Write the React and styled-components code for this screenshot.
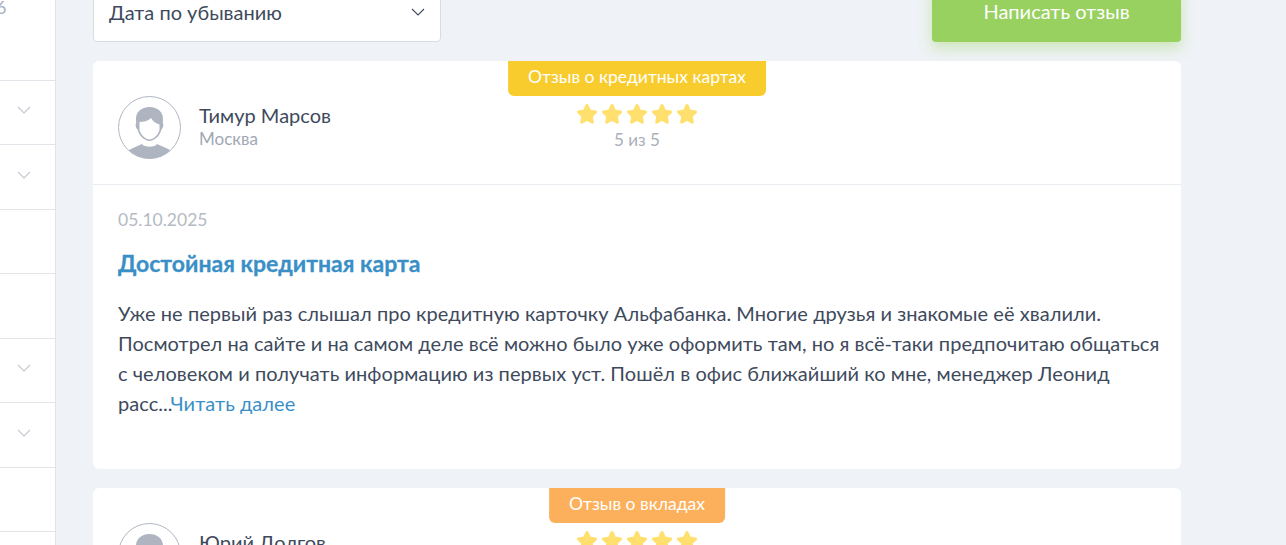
import styled, { createGlobalStyle } from 'styled-components';

const GlobalStyle = createGlobalStyle`
  html, body {
    margin: 0;
    height: 100%;
    overflow: hidden;
    background: #eff2f6;
  }
  * {
    box-sizing: border-box;
  }
`;

const Page = styled.div`
  display: flex;
  align-items: flex-start;
  height: 545px;
  overflow: hidden;
  font-family: Lato, "Noto Sans", "Liberation Sans", sans-serif;
  color: #3e4a5c;
`;

const Sidebar = styled.aside`
  flex: 0 0 56px;
  height: 545px;
  background: #fff;
  border-right: 1px solid #e1e4e9;
`;

const SideTop = styled.div`
  height: 79.5px;
  font-size: 18px;
  line-height: 14px;
  color: #aab1bd;
  margin-left: -4px;
`;

const SideRow = styled.div`
  height: 64.5px;
  border-top: 1px solid #e1e4e9;
  display: flex;
  align-items: center;
  justify-content: flex-end;
  padding: 0 24px 4px 0;
  color: #c3c8d0;
`;

const Main = styled.main`
  flex: 1;
  margin-top: -16px;
  padding: 0 105px 0 37px;
`;

const Toolbar = styled.div`
  display: flex;
  justify-content: space-between;
  margin-bottom: 19px;
`;

const SortSelect = styled.div`
  width: 348px;
  height: 58px;
  background: #fff;
  border: 1px solid #d9dde3;
  border-radius: 4px;
  display: flex;
  align-items: center;
  justify-content: space-between;
  padding: 0 15px 2px;
  font-size: 20px;
  color: #3e4a5c;
`;

const WriteButton = styled.button`
  width: 249px;
  height: 58px;
  border: 0;
  border-radius: 4px;
  background: #98d15f;
  box-shadow: 0 6px 14px rgba(152, 209, 95, 0.4);
  color: #fff;
  font: inherit;
  font-size: 20px;
  padding: 0 0 4px;
`;

const Card = styled.article`
  position: relative;
  background: #fff;
  border-radius: 6px;
  margin-bottom: 19px;
`;

const Badge = styled.div`
  position: absolute;
  top: 0;
  left: 50%;
  transform: translateX(-50%);
  height: 35px;
  padding: 0 20px 4px;
  display: flex;
  align-items: center;
  border-radius: 0 0 6px 6px;
  background: ${(p) => p.$bg};
  color: #fff;
  font-size: 17.5px;
  white-space: nowrap;
`;

const CardHead = styled.header`
  display: grid;
  grid-template-columns: 1fr auto 1fr;
  align-items: center;
  height: 124px;
  padding: 9px 25px 0;
  border-bottom: 1px solid #e9ecf0;
`;

const Author = styled.div`
  display: flex;
  align-items: center;
  gap: 18px;
`;

const Avatar = styled.svg`
  width: 63px;
  height: 63px;
  flex: none;
`;

const AuthorInfo = styled.div`
  margin-top: -1px;
`;

const AuthorName = styled.div`
  font-size: 20px;
  line-height: 24px;
  color: #3e4a5c;
`;

const AuthorCity = styled.div`
  font-size: 17px;
  line-height: 24px;
  color: #a0a7b4;
`;

const Rating = styled.div`
  display: flex;
  flex-direction: column;
  align-items: center;
`;

const Stars = styled.div`
  display: flex;
  gap: 1px;
  height: 26px;
`;

const RatingText = styled.div`
  font-size: 17px;
  line-height: 24px;
  color: #a9afbb;
`;

const CardBody = styled.div`
  padding: 23px 20px 51px 25px;
`;

const ReviewDate = styled.div`
  font-size: 17.5px;
  line-height: 24px;
  color: #b4bac4;
`;

const ReviewTitle = styled.h3`
  margin: 18px 0 22px;
  font-size: 23px;
  line-height: 26px;
  font-weight: 700;
  color: #3a8fc7;
  -webkit-text-stroke: 0.3px #3a8fc7;
`;

const ReviewText = styled.p`
  margin: 0;
  font-size: 20px;
  line-height: 30px;
  letter-spacing: 0.05px;
  white-space: nowrap;
  color: #3e4a5c;
`;

const ReadMore = styled.a`
  color: #3a8fc7;
`;

function Chevron() {
  return (
    <svg width="14" height="8" viewBox="0 0 14 8" fill="none" stroke="currentColor" strokeWidth="1.1">
      <path d="M1 1l6 6 6-6" />
    </svg>
  );
}

function Star() {
  return (
    <svg width="24" height="24" viewBox="0 0 24 24" fill="#ffe06e" stroke="#ffe06e" strokeWidth="3" strokeLinejoin="round">
      <path d="M12 3.5l2.6 5.600 6 .8-4.400 4.200 1.100 6.100L12 17.200 6.700 20.200l1.100-6.100-4.400-4.200 6-.8z" />
    </svg>
  );
}

function UserPic() {
  return (
    <Avatar viewBox="0 0 63 63">
      <defs>
        <clipPath id="avatar-clip">
          <circle cx="31.5" cy="31.5" r="31" />
        </clipPath>
      </defs>
      <circle cx="31.5" cy="31.5" r="31" fill="#fff" stroke="#b0b6c2" strokeWidth="1" />
      <g clipPath="url(#avatar-clip)" fill="#aeb5c1">
        <path d="M7 63c1-6 3-9 8-11l9-4c2 3.500 13 3.500 15 0l9 4c5 2 7 5 8 11z" />
        <path d="M18 24c-.5-8 5.500-13 13.500-13S45.500 16 45 24l-.2 3c1 1 .7 5-1.300 6.500C42 40 36 45 31.500 45S21 40 19.500 33.500C17.500 32 17.200 28 18.200 27z" />
      </g>
      <path d="M21.500 26c4 0 8.500-1 11.500-4 1.500 3 4 5 8.500 6.500V34c-1.500 5.500-6.500 9.500-10 9.500s-8.500-4-10-9.500z" fill="#fff" />
    </Avatar>
  );
}

function Review({ badge, badgeColor, name, city, children }) {
  return (
    <Card>
      <Badge $bg={badgeColor}>{badge}</Badge>
      <CardHead>
        <Author>
          <UserPic />
          <AuthorInfo>
            <AuthorName>{name}</AuthorName>
            <AuthorCity>{city}</AuthorCity>
          </AuthorInfo>
        </Author>
        <Rating>
          <Stars>
            <Star /><Star /><Star /><Star /><Star />
          </Stars>
          <RatingText>5 из 5</RatingText>
        </Rating>
      </CardHead>
      {children}
    </Card>
  );
}

export default function App() {
  return (
    <Page>
      <GlobalStyle />
      <Sidebar>
        <SideTop>6</SideTop>
        <SideRow><Chevron /></SideRow>
        <SideRow><Chevron /></SideRow>
        <SideRow />
        <SideRow />
        <SideRow><Chevron /></SideRow>
        <SideRow><Chevron /></SideRow>
        <SideRow />
        <SideRow />
      </Sidebar>
      <Main>
        <Toolbar>
          <SortSelect>
            Дата по убыванию
            <Chevron />
          </SortSelect>
          <WriteButton>Написать отзыв</WriteButton>
        </Toolbar>
        <Review badge="Отзыв о кредитных картах" badgeColor="#f9cc2e" name="Тимур Марсов" city="Москва">
          <CardBody>
            <ReviewDate>05.10.2025</ReviewDate>
            <ReviewTitle>Достойная кредитная карта</ReviewTitle>
            <ReviewText>
              Уже не первый раз слышал про кредитную карточку Альфабанка. Многие друзья и знакомые её хвалили.<br />
              Посмотрел на сайте и на самом деле всё можно было уже оформить там, но я всё-таки предпочитаю общаться<br />
              с человеком и получать информацию из первых уст. Пошёл в офис ближайший ко мне, менеджер Леонид<br />
              расс...<ReadMore>Читать далее</ReadMore>
            </ReviewText>
          </CardBody>
        </Review>
        <Review badge="Отзыв о вкладах" badgeColor="#fdb05c" name="Юрий Долгов" city="Москва" />
      </Main>
    </Page>
  );
}
